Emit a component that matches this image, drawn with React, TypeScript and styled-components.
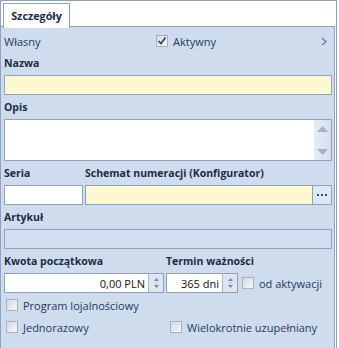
import styled, { createGlobalStyle } from "styled-components";

const GlobalStyle = createGlobalStyle`
  body {
    margin: 0;
    background: #ffffff;
    font-family: "Open Sans", "Noto Sans", sans-serif;
  }
`;

// ramka całości
const Frame = styled.div`
  width: 337px;
  height: 348px;
  box-sizing: border-box;
  border: 1px solid #8da2c0;
  border-bottom: none;
  background: #ffffff;
  display: flex;
  flex-direction: column;
  overflow: hidden;
`;

const TabBar = styled.div`
  height: 25px;
  box-sizing: border-box;
  padding: 2px 0 0 2px;
  display: flex;
  align-items: flex-start;
`;

const Tab = styled.div`
  position: relative;
  z-index: 1;
  width: 67px;
  height: 25px;
  box-sizing: border-box;
  border: 1px solid #8da2c0;
  border-bottom: none;
  background: #ffffff;
  font-size: 10.8px;
  font-weight: 700;
  color: #1b2c44;
  display: flex;
  justify-content: center;
  padding-top: 4px;
`;

const Panel = styled.div`
  flex: 1;
  margin-right: 1px;
  background: #cfdcee;
  border-top: 1px solid #8da2c0;
  border-right: 1px solid #8da2c0;
  padding: 4px 2px 0 3px;
  display: flex;
  flex-direction: column;
  gap: 4px;
`;

const TopRow = styled.div`
  height: 20px;
  display: grid;
  grid-template-columns: 152px 1fr auto;
  align-items: center;
  padding-right: 5px;
`;

const Text = styled.span`
  font-size: 11px;
  color: #1e3a5f;
  white-space: nowrap;
`;

const Field = styled.div`
  display: flex;
  flex-direction: column;
  gap: 4px;
  min-width: 0;
`;

const Label = styled.div`
  height: 16px;
  line-height: 16px;
  font-size: 10.5px;
  font-weight: 700;
  color: #1b2c44;
  white-space: nowrap;
`;

const Input = styled.div<{ $bg?: string; $h?: number }>`
  height: ${(p) => p.$h ?? 20}px;
  box-sizing: border-box;
  border: 1px solid #8da2c0;
  background: ${(p) => p.$bg ?? "#ffffff"};
  display: flex;
  align-items: stretch;
  font-size: 11px;
  color: #111111;
`;

const Value = styled.div`
  flex: 1;
  display: flex;
  align-items: center;
  justify-content: flex-end;
  padding-right: 3px;
`;

const Grow = styled.div`
  flex: 1;
`;

const Scrollbar = styled.div`
  width: 17px;
  background: linear-gradient(90deg, #e6ecf4, #d6e0ec);
  display: flex;
  flex-direction: column;
  justify-content: space-between;
  align-items: center;
  padding: 6px 0 5px;
`;

const DotsButton = styled.div`
  width: 18px;
  border-left: 1px solid #8da2c0;
  background: #dfe7f2;
  display: flex;
  align-items: center;
  justify-content: center;
  gap: 2px;
`;

const Dot = styled.span`
  width: 2px;
  height: 2px;
  background: #2c4a78;
`;

const Spinner = styled.div`
  width: 14px;
  border-left: 1px solid #a9b8cc;
  background: #dfe6f0;
  display: flex;
  align-items: center;
  justify-content: center;
`;

const Pair = styled.div<{ $cols: string }>`
  display: grid;
  grid-template-columns: ${(p) => p.$cols};
  gap: 2px;
`;

const TerminRow = styled.div`
  display: flex;
  align-items: center;
  gap: 4px;
`;

const Box = styled.span`
  width: 12px;
  height: 12px;
  box-sizing: border-box;
  border: 1px solid #a3b0c2;
  background: linear-gradient(135deg, #d3d9e2, #f7f8fa);
  display: inline-flex;
  align-items: center;
  justify-content: center;
  flex: none;
`;

const Check = styled.label`
  display: flex;
  align-items: center;
  gap: 5px;
  font-size: 11px;
  color: #1e3a5f;
  white-space: nowrap;
`;

const Options = styled.div`
  margin-top: -3px;
  display: grid;
  grid-template-columns: 164px 1fr;
  grid-auto-rows: 22px;
  align-items: center;
  padding-left: 2px;
`;

const Chevron = () => (
  <svg width="6" height="9" viewBox="0 0 6 9">
    <path d="M1 1 L5 4.5 L1 8" fill="none" stroke="#6d7a8c" strokeWidth="1.2" />
  </svg>
);

const Tick = () => (
  <svg width="10" height="10" viewBox="0 0 10 10">
    <path d="M1.5 5 L4 7.5 L8.5 1.5" fill="none" stroke="#2f3a48" strokeWidth="1.6" />
  </svg>
);

const Arrows = () => (
  <svg width="7" height="12" viewBox="0 0 7 12">
    <path d="M3.5 1 L6 4 L1 4 Z" fill="#7d8a9c" />
    <path d="M1 8 L6 8 L3.5 11 Z" fill="#7d8a9c" />
    <rect x="2" y="5.5" width="3" height="1" fill="#b6c1d0" />
  </svg>
);

const ScrollUp = () => (
  <svg width="11" height="6" viewBox="0 0 11 6">
    <path d="M5.5 0 L11 6 L0 6 Z" fill="#a6b3c6" />
  </svg>
);

const ScrollDown = () => (
  <svg width="11" height="6" viewBox="0 0 11 6">
    <path d="M0 0 L11 0 L5.5 6 Z" fill="#a6b3c6" />
  </svg>
);

const CheckItem = ({ label, checked }: { label: string; checked?: boolean }) => (
  <Check>
    <Box>{checked && <Tick />}</Box>
    {label}
  </Check>
);

const App = () => {
  return (
    <>
      <GlobalStyle />
      <Frame>
        <TabBar>
          <Tab>Szczegóły</Tab>
        </TabBar>
        <Panel>
          <TopRow>
            <Text>Własny</Text>
            <CheckItem label="Aktywny" checked />
            <Chevron />
          </TopRow>

          <Field>
            <Label>Nazwa</Label>
            <Input $bg="#fef8d0" />
          </Field>

          <Field>
            <Label>Opis</Label>
            <Input $h={42}>
              <Grow />
              <Scrollbar>
                <ScrollUp />
                <ScrollDown />
              </Scrollbar>
            </Input>
          </Field>

          <Pair $cols="79px 1fr">
            <Field>
              <Label>Seria</Label>
              <Input />
            </Field>
            <Field>
              <Label>Schemat numeracji (Konfigurator)</Label>
              <Input $bg="#fef8d0">
                <Grow />
                <DotsButton>
                  <Dot />
                  <Dot />
                  <Dot />
                </DotsButton>
              </Input>
            </Field>
          </Pair>

          <Field>
            <Label>Artykuł</Label>
            <Input $bg="#d2deef" />
          </Field>

          <Pair $cols="160px 1fr">
            <Field>
              <Label>Kwota początkowa</Label>
              <Input>
                <Value>0,00 PLN</Value>
                <Spinner>
                  <Arrows />
                </Spinner>
              </Input>
            </Field>
            <Field>
              <Label>Termin ważności</Label>
              <TerminRow>
                <Input style={{ width: 72 }}>
                  <Value>365 dni</Value>
                  <Spinner>
                    <Arrows />
                  </Spinner>
                </Input>
                <CheckItem label="od aktywacji" />
              </TerminRow>
            </Field>
          </Pair>

          <Options>
            <CheckItem label="Program lojalnościowy" />
            <span />
            <CheckItem label="Jednorazowy" />
            <CheckItem label="Wielokrotnie uzupełniany" />
          </Options>
        </Panel>
      </Frame>
    </>
  );
};

export default App;
